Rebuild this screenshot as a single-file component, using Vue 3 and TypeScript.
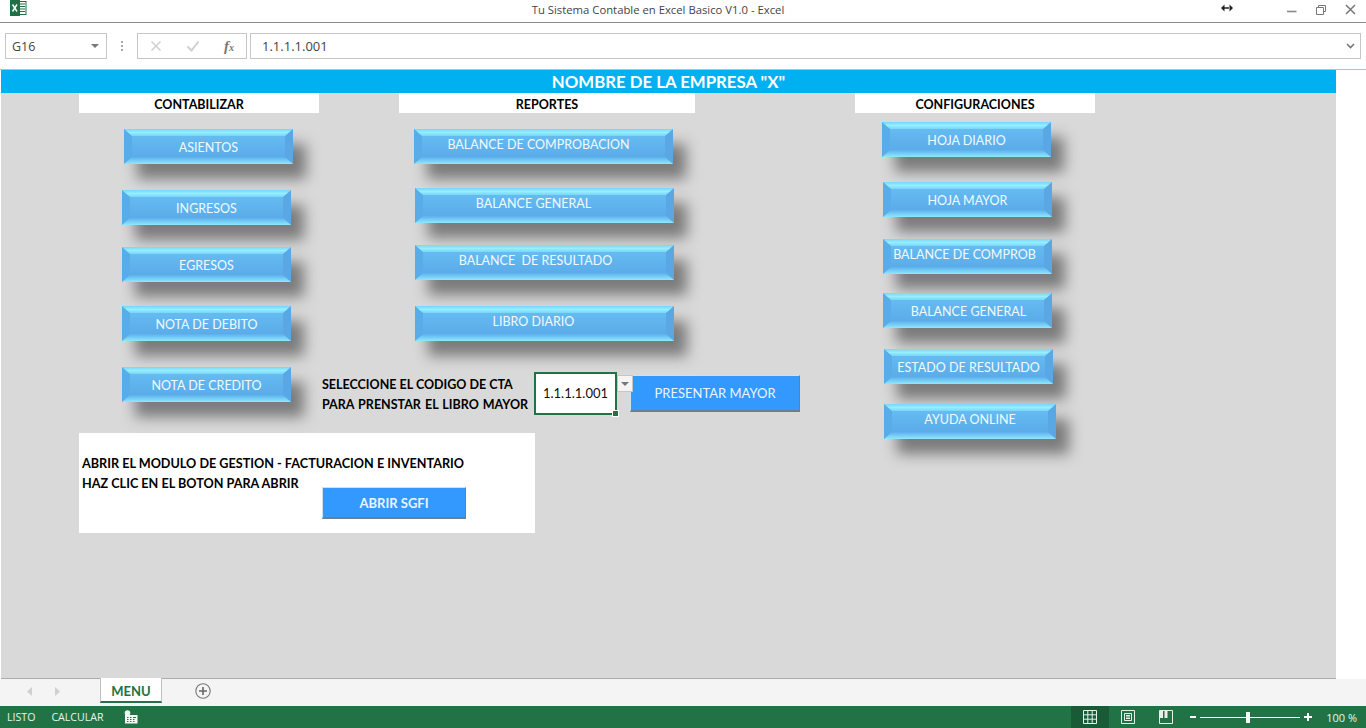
<template>
  <div class="excel">
    <!-- Title bar -->
    <header class="titlebar">
      <svg class="xl-logo" width="17" height="16" viewBox="0 0 17 16">
        <rect x="6" y="1.5" width="10" height="13" fill="#fff" stroke="#1e7145" />
        <path d="M10 4h5M10 6.5h5M10 9h5M10 11.5h5" stroke="#1e7145" />
        <rect x="0" y="0" width="10" height="16" fill="#1e7145" />
        <path d="M2.5 4.5l4.500 7M7 4.5l-4.500 7" stroke="#fff" stroke-width="1.500" />
      </svg>
      <span class="title">Tu Sistema Contable en Excel Basico V1.0 - Excel</span>
      <svg class="cursor" width="12" height="8" viewBox="0 0 12 8">
        <path d="M0 4l3.500-3.500v7zM12 4L8.500.5v7zM3 3.200h6v1.600H3z" fill="#222" />
      </svg>
      <div class="win-ctrls">
        <svg width="10" height="10" viewBox="0 0 10 10"><path d="M0 6.500h9.500" stroke="#8a8a8a" stroke-width="1.600" /></svg>
        <svg width="10" height="10" viewBox="0 0 10 10">
          <path d="M2.500 2.500V.5h7v6H7.500M.5 2.500h7v7h-7z" fill="none" stroke="#777" />
        </svg>
        <svg width="11" height="11" viewBox="0 0 11 11"><path d="M1 1l9 9M10 1l-9 9" stroke="#777" stroke-width="1.500" /></svg>
      </div>
    </header>

    <!-- Formula bar -->
    <div class="formula-bar">
      <div class="name-box">
        <span>G16</span>
        <i class="caret"></i>
      </div>
      <div class="grip"><b></b><b></b><b></b></div>
      <div class="fx-box">
        <svg width="12" height="12" viewBox="0 0 12 12"><path d="M1.500 1.500l9 9M10.500 1.500l-9 9" stroke="#cfcfcf" stroke-width="1.500" /></svg>
        <svg width="14" height="12" viewBox="0 0 14 12"><path d="M1.500 6.500l4 4 7-9" fill="none" stroke="#cfcfcf" stroke-width="2" /></svg>
        <span class="fx">f<small>x</small></span>
      </div>
      <div class="formula-input">
        <span>1.1.1.1.001</span>
        <svg width="9" height="6" viewBox="0 0 9 6"><path d="M1 1l3.500 3.500L8 1" fill="none" stroke="#777" stroke-width="1.600" /></svg>
      </div>
    </div>

    <!-- Worksheet -->
    <main class="sheet">
      <div class="canvas">
        <h1 class="banner">NOMBRE DE LA EMPRESA "X"</h1>
        <div class="board">
          <section class="col col-a">
            <h2 class="col-title">CONTABILIZAR</h2>
            <button
              v-for="b in contabilizar"
              :key="b.label"
              class="bevel"
              :style="bevelStyle(b)"
            >{{ b.label }}</button>

            <div class="sgfi">
              <p>ABRIR EL MODULO DE GESTION - FACTURACION E INVENTARIO</p>
              <p>HAZ CLIC EN EL BOTON PARA ABRIR</p>
              <button class="flat flat-sgfi">ABRIR SGFI</button>
            </div>
          </section>

          <section class="col col-b">
            <h2 class="col-title">REPORTES</h2>
            <button
              v-for="b in reportes"
              :key="b.label"
              class="bevel"
              :style="bevelStyle(b)"
            >{{ b.label }}</button>

            <div class="picker">
              <p class="picker-text">SELECCIONE EL CODIGO DE CTA<br /><span>PARA PRENSTAR EL LIBRO MAYOR</span></p>
              <div class="cell">
                1.1.1.1.001
                <i class="handle"></i>
              </div>
              <div class="drop"><i class="caret"></i></div>
              <button class="flat flat-mayor">PRESENTAR MAYOR</button>
            </div>
          </section>

          <section class="col col-c">
            <h2 class="col-title">CONFIGURACIONES</h2>
            <button
              v-for="b in configuraciones"
              :key="b.label"
              class="bevel"
              :style="bevelStyle(b)"
            >{{ b.label }}</button>
          </section>
        </div>
      </div>
    </main>

    <!-- Sheet tabs -->
    <div class="tabs">
      <svg class="nav" width="7" height="9" viewBox="0 0 7 9"><path d="M6 0v9L1 4.500z" fill="#d0d0d0" /></svg>
      <svg class="nav nav-next" width="7" height="9" viewBox="0 0 7 9"><path d="M1 0v9l5-4.500z" fill="#d0d0d0" /></svg>
      <div class="tab">MENU</div>
      <svg class="add" width="16" height="16" viewBox="0 0 16 16">
        <circle cx="8" cy="8" r="7.200" fill="none" stroke="#777" stroke-width="1.100" />
        <path d="M8 4v8M4 8h8" stroke="#666" stroke-width="1.600" />
      </svg>
    </div>

    <!-- Status bar -->
    <footer class="status">
      <span class="st-listo">LISTO</span>
      <span class="st-calc">CALCULAR</span>
      <svg class="st-macro" width="14" height="14" viewBox="0 0 14 14">
        <circle cx="3.500" cy="3" r="2.800" fill="#f2f8f4" />
        <rect x="1" y="5" width="12.500" height="8.500" fill="#f2f8f4" />
        <path d="M3 7.500h1.500M6 7.500h1.500M9 7.500h3M3 9.500h1.500M6 9.500h1.500M9 9.500h1.500M3 11.500h1.500M6 11.500h1.500M9 11.500h1.500" stroke="#217346" />
      </svg>
      <div class="views">
        <div class="view view-on">
          <svg width="14" height="14" viewBox="0 0 14 14"><path d="M.5.5h13v13H.5zM.5 4.800h13M.5 9.200h13M4.800.5v13M9.200.5v13" fill="none" stroke="#e4f2ea" /></svg>
        </div>
        <div class="view">
          <svg width="14" height="14" viewBox="0 0 14 14"><path d="M.5.5h13v13H.5zM3.500 3.500h7v7h-7zM5 5.500h4M5 7h4M5 8.500h4" fill="none" stroke="#e4f2ea" /></svg>
        </div>
        <div class="view">
          <svg width="14" height="14" viewBox="0 0 14 14"><path d="M.5.5h13v13H.5z" fill="none" stroke="#e4f2ea" /><path d="M1 1h3v7H1zM5.500 1h3v7h-3z" fill="#e4f2ea" /></svg>
        </div>
      </div>
      <div class="zoom">
        <i class="zoom-minus"></i>
        <div class="zoom-track"><i class="zoom-thumb"></i></div>
        <svg width="8" height="8" viewBox="0 0 8 8"><path d="M4 0v8M0 4h8" stroke="#fff" stroke-width="2" /></svg>
      </div>
      <span class="zoom-pct">100 %</span>
    </footer>
  </div>
</template>

<script setup lang="ts">
interface BevelButton {
  label: string;
  left: number; // offset from the column start
  gap: number; // distance from the element above
  width?: number;
  shift?: number; // the captions aren't all centered in the original
  high?: boolean; // caption sits above the middle
}

const contabilizar: BevelButton[] = [
  { label: 'ASIENTOS', left: 45, gap: 16 },
  { label: 'INGRESOS', left: 43, gap: 26 },
  { label: 'EGRESOS', left: 43, gap: 22 },
  { label: 'NOTA DE DEBITO', left: 43, gap: 24 },
  { label: 'NOTA DE CREDITO', left: 43, gap: 26 }
];

const reportes: BevelButton[] = [
  { label: 'BALANCE DE COMPROBACION', left: 92, gap: 16, width: 259, shift: -5, high: true },
  { label: 'BALANCE GENERAL', left: 93, gap: 24, width: 259, shift: -11, high: true },
  { label: 'BALANCE  DE RESULTADO', left: 93, gap: 22, width: 259, shift: -9, high: true },
  { label: 'LIBRO DIARIO', left: 93, gap: 26, width: 259, shift: -11, high: true }
];

const configuraciones: BevelButton[] = [
  { label: 'HOJA DIARIO', left: 27, gap: 9 },
  { label: 'HOJA MAYOR', left: 28, gap: 25 },
  { label: 'BALANCE DE COMPROB', left: 28, gap: 22, shift: -3, high: true },
  { label: 'BALANCE GENERAL', left: 28, gap: 19, shift: 1 },
  { label: 'ESTADO DE RESULTADO', left: 29, gap: 21 },
  { label: 'AYUDA ONLINE', left: 29, gap: 20, width: 172, high: true }
];

const bevelStyle = (b: BevelButton) => ({
  marginLeft: `${b.left}px`,
  marginTop: `${b.gap}px`,
  width: `${b.width ?? 169}px`,
  padding: b.high ? '0 0 4px' : '1px 0 0',
  textIndent: `${(b.shift ?? 0) * 2}px`
});
</script>

<style>
html,
body {
  margin: 0;
  overflow: hidden;
}
</style>

<style scoped>
.excel {
  width: 1366px;
  height: 728px;
  display: flex;
  flex-direction: column;
  background: #fff;
  font-family: "Open Sans", sans-serif;
  overflow: hidden;
}

/* Title bar */
.titlebar {
  height: 22px;
  flex: none;
  position: relative;
  display: flex;
  align-items: center;
  justify-content: center;
  padding-right: 50px;
  border-bottom: 1px solid #8c8c8c;
}

.xl-logo {
  position: absolute;
  left: 10px;
  top: 0;
}

.title {
  font-size: 11.300px;
  color: #444;
  padding-bottom: 3px;
}

.cursor {
  position: absolute;
  left: 1221px;
  top: 4px;
}

.win-ctrls {
  position: absolute;
  right: 10px;
  top: 4px;
  display: flex;
  align-items: center;
  gap: 19px;
}

/* Formula bar */
.formula-bar {
  height: 46px;
  flex: none;
  box-sizing: border-box;
  padding: 10px 5px 10px 5px;
  display: flex;
  background: #fff;
}

.name-box {
  width: 102px;
  box-sizing: border-box;
  border: 1px solid #c6c6c6;
  display: flex;
  align-items: center;
  justify-content: space-between;
  padding: 0 7px 0 6px;
  font-size: 12.500px;
  color: #444;
}

.caret {
  display: block;
  width: 0;
  height: 0;
  border-left: 4px solid transparent;
  border-right: 4px solid transparent;
  border-top: 4px solid #777;
}

.grip {
  width: 30px;
  display: flex;
  flex-direction: column;
  align-items: center;
  justify-content: center;
  gap: 2px;
}

.grip b {
  width: 2px;
  height: 2px;
  background: #a8a8a8;
}

.fx-box {
  width: 110px;
  box-sizing: border-box;
  border: 1px solid #c6c6c6;
  display: flex;
  align-items: center;
  justify-content: space-between;
  padding: 0 12px 0 12px;
  margin-right: 3px;
}

.fx {
  font-family: "Liberation Serif", serif;
  font-style: italic;
  font-weight: 700;
  font-size: 15px;
  color: #777;
}

.fx small {
  font-size: 10px;
}

.formula-input {
  flex: 1;
  box-sizing: border-box;
  border: 1px solid #c6c6c6;
  display: flex;
  align-items: center;
  justify-content: space-between;
  padding: 0 5px 0 11px;
  font-size: 13px;
  color: #444;
}

/* Worksheet */
.sheet {
  flex: 1;
  min-height: 0;
  border-top: 1px solid #a9c4cf;
  padding-left: 1px;
}

.canvas {
  width: 1335px;
  height: 100%;
  box-sizing: border-box;
  background: #d9d9d9;
  border-bottom: 1px solid #ababab;
  font-family: Lato, sans-serif;
}

.banner {
  margin: 0;
  height: 23px;
  line-height: 24px;
  background: #00b0f0;
  color: #fff;
  text-align: center;
  font-size: 16.800px;
  font-weight: 700;
}

.board {
  display: flex;
  align-items: flex-start;
  padding-left: 78px;
}

.col {
  flex: none;
  display: flex;
  flex-direction: column;
  align-items: flex-start;
}

.col-a {
  width: 243px;
}

.col-b {
  width: 533px;
}

.col-title {
  margin: 0;
  height: 20px;
  line-height: 23px;
  background: #fff;
  color: #000;
  text-align: center;
  font-size: 12.500px;
  font-weight: 700;
}

.col-a .col-title {
  width: 240px;
}

.col-b .col-title {
  width: 296px;
  margin-left: 77px;
}

.col-c .col-title {
  width: 240px;
}

/* Beveled shape buttons */
.bevel {
  position: relative;
  display: block;
  flex: none;
  height: 35px;
  box-sizing: border-box;
  border: 0;
  background:
    linear-gradient(90deg, #58ade9 0 8px, transparent 8px calc(100% - 8px), #5ba7e3 calc(100% - 8px)),
    linear-gradient(#68c0f4, #58a6e6);
  color: #f0faff;
  font-family: Lato, sans-serif;
  font-size: 12.500px;
  white-space: pre;
  text-align: center;
  box-shadow: 13px 15px 14px rgba(60, 60, 60, 0.6);
}

.bevel::before,
.bevel::after {
  content: '';
  position: absolute;
  left: 0;
  right: 0;
  height: 7px;
}

.bevel::before {
  top: 0;
  background: linear-gradient(#7ad4f8, #95effe 50%, #7ad4f8);
  clip-path: polygon(0 0, 100% 0, calc(100% - 8px) 100%, 8px 100%);
}

.bevel::after {
  bottom: 0;
  background: linear-gradient(#5cb0ec, #8ee8fd);
  clip-path: polygon(8px 0, calc(100% - 8px) 0, 100% 100%, 0 100%);
}

/* Plain blue buttons */
.flat {
  display: block;
  flex: none;
  box-sizing: border-box;
  padding: 0;
  border: 1px solid #cfe0ee;
  border-right-color: #6d7f8e;
  border-bottom: 2px solid #6d7f8e;
  background: #3399ff;
  color: #eaf4ff;
  font-family: Lato, sans-serif;
  font-size: 13px;
  text-align: center;
}

.flat-mayor {
  width: 170px;
  height: 37px;
  margin: 3px 0 0 -3px;
}

.flat-sgfi {
  width: 144px;
  height: 32px;
  margin: -7px 0 0 240px;
  font-weight: 700;
}

/* Cuenta selector */
.picker {
  display: flex;
  align-items: flex-start;
  margin-top: 31px;
}

.picker-text {
  margin: 3px 4px 0 0;
  width: 208px;
  flex: none;
  font-size: 12.500px;
  font-weight: 700;
  line-height: 20px;
  color: #000;
  white-space: nowrap;
}

.picker-text span {
  word-spacing: 1px;
}

.cell {
  position: relative;
  width: 83px;
  height: 43px;
  flex: none;
  box-sizing: border-box;
  border: 2px solid #217346;
  background: #fff;
  font-size: 13px;
  line-height: 39px;
  text-align: center;
  color: #111;
}

.handle {
  position: absolute;
  right: -4px;
  bottom: -4px;
  width: 5px;
  height: 5px;
  background: #217346;
  border: 1px solid #fff;
}

.drop {
  position: relative;
  z-index: 1;
  width: 16px;
  height: 17px;
  flex: none;
  box-sizing: border-box;
  margin: 3px 0 0 0;
  border: 1px solid #c6c6c6;
  background: #f4f4f4;
  display: flex;
  align-items: center;
  justify-content: center;
}

/* SGFI panel */
.sgfi {
  width: 456px;
  height: 100px;
  flex: none;
  box-sizing: border-box;
  margin: 31px 0 0 0;
  padding: 21px 0 0 3px;
  background: #fff;
  color: #000;
  font-size: 12.650px;
  font-weight: 700;
  line-height: 20px;
}

.sgfi p {
  margin: 0;
  white-space: nowrap;
}

/* Sheet tabs */
.tabs {
  height: 27px;
  flex: none;
  box-sizing: border-box;
  background: #f4f4f4;
  display: flex;
  align-items: flex-start;
  padding-left: 26px;
}

.nav {
  margin-top: 8px;
}

.nav-next {
  margin-left: 21px;
}

.tab {
  width: 62px;
  height: 25px;
  box-sizing: border-box;
  margin: -1px 0 0 39px;
  background: #fff;
  border-left: 1px solid #c0c0c0;
  border-right: 1px solid #c0c0c0;
  border-bottom: 2px solid #2a6e4a;
  color: #217346;
  font-family: Lato, sans-serif;
  font-weight: 700;
  font-size: 13px;
  line-height: 26px;
  text-align: center;
}

.add {
  margin: 4px 0 0 33px;
}

/* Status bar */
.status {
  height: 22px;
  flex: none;
  background: #217346;
  color: #e8f3ed;
  font-size: 10.600px;
  display: flex;
  align-items: center;
  position: relative;
}

.st-listo {
  margin-left: 7px;
}

.st-calc {
  margin-left: 16px;
}

.st-macro {
  margin-left: 21px;
}

.views {
  display: flex;
  margin-left: auto;
  height: 100%;
}

.view {
  width: 38px;
  display: flex;
  align-items: center;
  justify-content: center;
}

.view-on {
  background: #185c37;
}

.zoom {
  width: 122px;
  margin-left: 5px;
  display: flex;
  align-items: center;
}

.zoom-minus {
  display: block;
  width: 6px;
  height: 2px;
  background: #fff;
}

.zoom-track {
  position: relative;
  width: 100px;
  height: 1px;
  margin: 0 4px 0 4px;
  background: #fff;
}

.zoom-thumb {
  position: absolute;
  left: 46px;
  top: -5px;
  width: 4px;
  height: 11px;
  background: #fff;
}

.zoom-pct {
  margin: 0 9px 0 14px;
  font-size: 11px;
}
</style>
